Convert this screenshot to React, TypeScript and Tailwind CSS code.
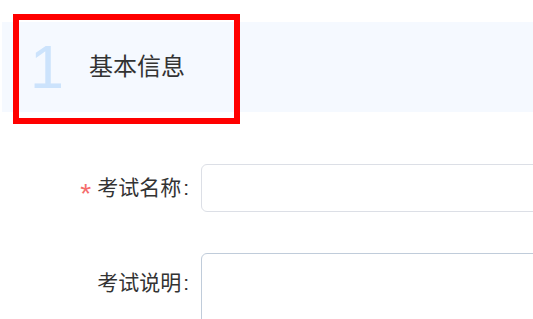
import React from "react";

export default function App() {
  return (
    <div
      className="relative w-[533px] h-[319px] overflow-hidden bg-white"
      style={{ fontFamily: '"Liberation Sans", "Noto Sans CJK SC", sans-serif' }}
    >
      <div className="ml-[2px] mt-[22px] flex h-[90px] items-center bg-[#f5f9ff]">
        <span className="ml-[28px] w-[59px] text-[61px] leading-none text-[#cce3fc]">
          1
        </span>
        <span className="text-[24px] leading-none text-[#333333]">基本信息</span>
      </div>

      <div className="absolute left-[13px] top-[14px] h-[110px] w-[227px] border-[6px] border-[#ff0000]" />

      <div className="mt-[52px] w-[700px] text-[21px] text-[#333333]">
        <div className="flex items-center">
          <label className="flex w-[189px] items-center justify-end">
            <span className="relative top-[6px] mr-[6px] text-[28px] leading-none text-[#f56c6c]">*</span>
            <span>考试名称<span className="ml-[2px]">:</span></span>
          </label>
          <div className="ml-[12px] h-[48px] w-[450px] rounded-[6px] border border-[#dcdfe6] bg-white" />
        </div>
        <div className="mt-[41px] flex items-start">
          <label className="flex w-[189px] justify-end pt-[18px] leading-[24px]">
            <span>考试说明<span className="ml-[2px]">:</span></span>
          </label>
          <div className="ml-[12px] h-[100px] w-[450px] rounded-[6px] border border-[#c0ccda] bg-white" />
        </div>
      </div>
    </div>
  );
}
